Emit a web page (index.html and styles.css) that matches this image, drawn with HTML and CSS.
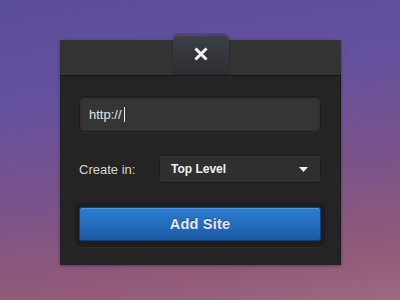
FILE: index.html
```html
<!DOCTYPE html>
<html>
<head>
<meta charset="utf-8">
<link rel="stylesheet" href="styles.css">
</head>
<body>
<div class="panel">
  <div class="header">
    <div class="tab">
      <svg width="14" height="14" viewBox="0 0 14 14"><path d="M2.5 2.5 L11.5 11.5 M11.5 2.5 L2.5 11.5" stroke="#f2f2f2" stroke-width="3" stroke-linecap="square"/></svg>
    </div>
  </div>
  <div class="body">
    <div class="input"><span class="url">http://</span><span class="caret"></span></div>
    <div class="row">
      <span class="label">Create in:</span>
      <div class="select"><span>Top Level</span><svg width="9" height="5" viewBox="0 0 9 5"><path d="M0 0 H9 L4.5 5 Z" fill="#eee"/></svg></div>
    </div>
    <div class="well"><div class="button">Add Site</div></div>
  </div>
</div>
</body>
</html>
```
FILE: styles.css
```css
html, body { margin: 0; height: 100%; }
body {
  width: 400px; height: 300px; overflow: hidden;
  background: linear-gradient(172deg, #5a4b98 0%, #65529f 30%, #7b5389 60%, #925a78 85%, #9c6a82 100%);
  font-family: "Liberation Sans", Arial, sans-serif;
  padding-top: 40px; box-sizing: border-box;
}
.panel {
  width: 281px; margin-left: 60px;
  box-shadow: 0 1px 3px rgba(0,0,0,0.35);
}
.header {
  height: 35px; background: #333333;
  border-bottom: 1px solid #151515;
  display: flex; justify-content: center; align-items: flex-start;
}
.tab {
  width: 56px; height: 40px; margin-top: -5px;
  background: linear-gradient(#3d4046, #2b2d31);
  border-radius: 5px 5px 0 0;
  box-shadow: 0 -1px 2px rgba(0,0,0,0.35), inset 0 1px 0 rgba(255,255,255,0.08);
  display: flex; align-items: center; justify-content: center;
}
.tab svg { margin-bottom: 2px; }
.body {
  background: #242424;
  padding: 20px 19px 18px 19px;
  border-right: 1px solid #1a1a1a;
}
.input {
  height: 36px; box-sizing: border-box;
  background: #353535; border: 1px solid #1c1c1c; border-radius: 5px;
  box-shadow: inset 0 1px 2px rgba(0,0,0,0.4), 0 1px 0 rgba(255,255,255,0.04);
  display: flex; align-items: center; padding-left: 9px;
  color: #e6e6e6; font-size: 13px;
}
.caret { width: 1px; height: 15px; background: #f0f0f0; margin-left: 2px; }
.row {
  display: flex; align-items: center; margin-top: 23px;
}
.label { color: #d8d8d8; font-size: 13px; width: 80px; }
.select {
  flex: 1; height: 28px; box-sizing: border-box;
  background: #2f2f2f; border: 1px solid #1c1c1c; border-radius: 3px;
  box-shadow: inset 0 1px 0 rgba(255,255,255,0.05);
  display: flex; align-items: center; justify-content: space-between;
  padding: 0 12px 0 11px;
  color: #f0f0f0; font-size: 12px; font-weight: bold;
}
.well {
  margin: 19px -4px 0 -4px;
  background: #1d1d1d; border-radius: 6px;
  padding: 5px 4px 6px 4px;
  box-shadow: 0 1px 0 rgba(255,255,255,0.04);
}
.button {
  height: 34px; box-sizing: border-box;
  background: linear-gradient(#2c7dd4, #1b5aa3);
  border: 1px solid #123f78; border-radius: 3px;
  box-shadow: inset 0 1px 0 rgba(255,255,255,0.2);
  display: flex; align-items: center; justify-content: center;
  color: #e6e6e6; font-size: 14.5px; font-weight: bold; letter-spacing: 0.2px;
  text-shadow: 0 -1px 0 rgba(0,0,0,0.3);
}
```
